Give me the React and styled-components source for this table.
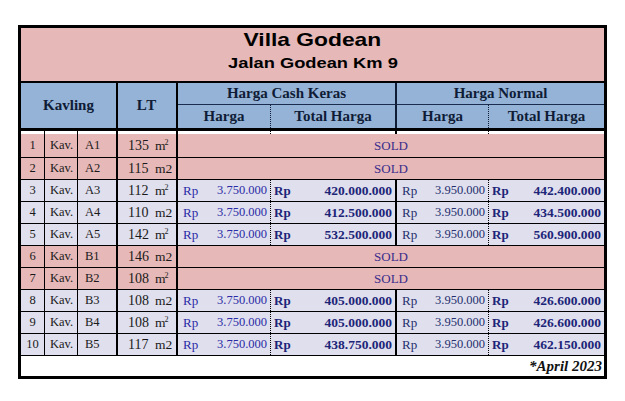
import React from "react";
import styled, { createGlobalStyle } from "styled-components";

const GlobalStyle = createGlobalStyle`
  body {
    margin: 0;
    background: #fff;
  }
`;

const COLS = "24px 33px 40px 60px 93px 126px 92px 115px";
const PINK = "#e6b8b7";
const LAVENDER = "#dfdfed";
const BLUE = "#95b3d7";

// right-hand border of each column in the body
const EDGES = [
  "1px solid #000",
  "1px solid #000",
  "2px solid #000",
  "2px solid #000",
  "1px dotted #000",
  "2px solid #000",
  "1px dotted #000",
  "none",
];

const Page = styled.div`
  padding: 25px 0 0 18px;
`;

const Sheet = styled.div`
  width: 589px;
  box-sizing: border-box;
  border: 3px solid #000;
  font-family: "Liberation Serif", "Times New Roman", serif;
`;

const TitleBlock = styled.div`
  height: 55px;
  box-sizing: border-box;
  padding-top: 1px;
  background: ${PINK};
  border-bottom: 2px solid #000;
  display: flex;
  flex-direction: column;
  align-items: center;
  font-family: "Liberation Sans", Arial, sans-serif;
  font-weight: bold;
  color: #000;
`;

const Title = styled.span`
  display: inline-block;
  font-size: 19px;
  line-height: 21px;
  transform: scaleX(1.2);
`;

const Subtitle = styled.span`
  display: inline-block;
  margin-top: 2px;
  font-size: 15.5px;
  line-height: 22px;
  transform: scaleX(1.18);
`;

const HeadGrid = styled.div`
  display: grid;
  grid-template-columns: ${COLS};
  grid-template-rows: 22px 23px;
  background: ${BLUE};
  border-bottom: 3px solid #000;
  color: #0f1c36;
  font-weight: bold;
  font-size: 15px;
`;

const HeadCell = styled.div`
  grid-column: ${(p) => p.$col};
  grid-row: ${(p) => p.$row};
  box-sizing: border-box;
  display: flex;
  align-items: center;
  justify-content: center;
  border-right: ${(p) => p.$edge || "none"};
  border-bottom: ${(p) => (p.$under ? "1px solid #1b2d4f" : "none")};
  letter-spacing: ${(p) => p.$spread || 0};
`;

const Row = styled.div`
  display: grid;
  grid-template-columns: ${COLS};
  height: ${(p) => p.$h}px;
  box-sizing: border-box;
  background: ${(p) => p.$bg};
  border-bottom: ${(p) => (p.$line ? "1px solid #000" : "none")};
`;

const Cell = styled.div`
  box-sizing: border-box;
  display: flex;
  align-items: center;
  justify-content: ${(p) => p.$justify || "flex-start"};
  padding-left: ${(p) => p.$pad || 0}px;
  border-right: ${(p) => p.$edge};
  font-size: 12.5px;
  color: #1a1a1a;
  white-space: nowrap;
`;

const LtNum = styled.span`
  font-size: 14px;
  width: 22px;
`;

const LtUnit = styled.span`
  font-size: 13.5px;
  margin-left: 5px;
`;

const Sup = styled.sup`
  font-size: 8px;
  vertical-align: 5px;
  margin-left: -1px;
`;

const PriceCell = styled.div`
  box-sizing: border-box;
  display: flex;
  align-items: center;
  justify-content: space-between;
  padding: 0 3px 0 ${(p) => (p.$bold ? 3 : 5)}px;
  border-right: ${(p) => p.$edge};
  color: ${(p) => p.$tone};
  font-weight: ${(p) => (p.$bold ? "bold" : "normal")};
  font-size: ${(p) => (p.$bold ? 13.5 : 12.5)}px;
  white-space: nowrap;
`;

const Rp = styled.span`
  font-size: 13px;
`;

const Sold = styled.div`
  grid-column: 5 / span 4;
  display: flex;
  align-items: center;
  justify-content: center;
  font-size: 13px;
  color: #3a2d8c;
`;

const Footer = styled.div`
  height: 20px;
  display: flex;
  align-items: center;
  justify-content: flex-end;
  padding-right: 2px;
  font-size: 15px;
  font-weight: bold;
  font-style: italic;
  color: #111;
`;

const rows = [
  { no: 1, code: "A1", lt: 135, sq: true, sold: true },
  { no: 2, code: "A2", lt: 115, sq: false, sold: true },
  { no: 3, code: "A3", lt: 112, sq: true, cash: "420.000.000", normal: "442.400.000" },
  { no: 4, code: "A4", lt: 110, sq: false, cash: "412.500.000", normal: "434.500.000" },
  { no: 5, code: "A5", lt: 142, sq: true, cash: "532.500.000", normal: "560.900.000" },
  { no: 6, code: "B1", lt: 146, sq: false, sold: true },
  { no: 7, code: "B2", lt: 108, sq: true, sold: true },
  { no: 8, code: "B3", lt: 108, sq: false, cash: "405.000.000", normal: "426.600.000" },
  { no: 9, code: "B4", lt: 108, sq: true, cash: "405.000.000", normal: "426.600.000" },
  { no: 10, code: "B5", lt: 117, sq: false, cash: "438.750.000", normal: "462.150.000" },
];

const Price = ({ value, bold, tone, edge }) => (
  <PriceCell $bold={bold} $tone={tone} $edge={edge}>
    <Rp>Rp</Rp>
    <span>{value}</span>
  </PriceCell>
);

const DataRow = ({ row, first }) => (
  <Row $h={first ? 24 : 22} $bg={row.sold ? PINK : LAVENDER} $line>
    <Cell $edge={EDGES[0]} $justify="center">{row.no}</Cell>
    <Cell $edge={EDGES[1]} $pad={5}>Kav.</Cell>
    <Cell $edge={EDGES[2]} $pad={7}>{row.code}</Cell>
    <Cell $edge={EDGES[3]} $pad={10}>
      <LtNum>{row.lt}</LtNum>
      <LtUnit>
        m{row.sq ? <Sup>2</Sup> : "2"}
      </LtUnit>
    </Cell>
    {row.sold ? (
      <Sold>SOLD</Sold>
    ) : (
      <>
        <Price value="3.750.000" tone="#2b2ba6" edge={EDGES[4]} />
        <Price value={row.cash} bold tone="#1d2579" edge={EDGES[5]} />
        <Price value="3.950.000" tone="#26306e" edge={EDGES[6]} />
        <Price value={row.normal} bold tone="#1d2579" edge={EDGES[7]} />
      </>
    )}
  </Row>
);

export default function App() {
  return (
    <Page>
      <GlobalStyle />
      <Sheet>
        <TitleBlock>
          <Title>Villa Godean</Title>
          <Subtitle>Jalan Godean Km 9</Subtitle>
        </TitleBlock>

        <HeadGrid>
          <HeadCell $col="1 / span 3" $row="1 / span 2" $edge="2px solid #000">
            Kavling
          </HeadCell>
          <HeadCell $col="4" $row="1 / span 2" $edge="2px solid #000" $spread="1px">
            LT
          </HeadCell>
          <HeadCell $col="5 / span 2" $row="1" $edge="2px solid #0f1c36" $under>
            Harga Cash Keras
          </HeadCell>
          <HeadCell $col="7 / span 2" $row="1" $under>
            Harga Normal
          </HeadCell>
          <HeadCell $col="5" $row="2" $edge="1px dotted #0f1c36">Harga</HeadCell>
          <HeadCell $col="6" $row="2" $edge="2px solid #0f1c36">Total Harga</HeadCell>
          <HeadCell $col="7" $row="2" $edge="1px dotted #0f1c36">Harga</HeadCell>
          <HeadCell $col="8" $row="2">Total Harga</HeadCell>
        </HeadGrid>

        <Row $h={3} $bg="#fff">
          {EDGES.map((edge, i) => (
            <Cell key={i} $edge={edge} />
          ))}
        </Row>

        {rows.map((row, i) => (
          <DataRow key={row.no} row={row} first={i === 0} />
        ))}

        <Footer>*April 2023</Footer>
      </Sheet>
    </Page>
  );
}
